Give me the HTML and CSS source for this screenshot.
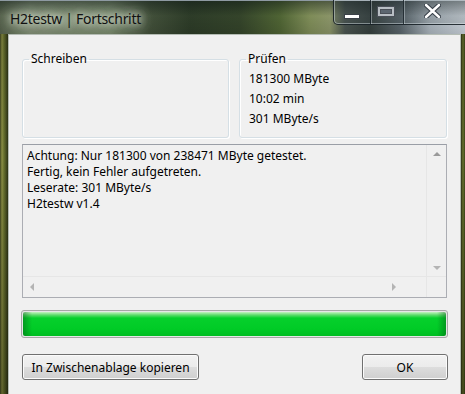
FILE: index.html
```html
<!DOCTYPE html>
<html lang="de">

  <head>
    <meta charset="UTF-8">
    <meta name="viewport" content="width=device-width, initial-scale=1.0">
    <title>H2testw | Fortschritt</title>

    <link rel="stylesheet" href="styles.css">
  </head>

  <body>

    <div class="window">

      <div class="titlebar">
        <span class="title">H2testw | Fortschritt</span>
        <div class="caption-buttons">
          <span class="cap cap-min">
            <svg width="16" height="5" viewBox="0 0 16 5">
              <rect x="0.5" y="0.5" width="15" height="4" fill="#fff" stroke="#3a4048" stroke-width="1"/>
            </svg>
          </span>
          <span class="cap cap-max">
            <svg width="18" height="11" viewBox="0 0 18 11">
              <rect x="0.5" y="0.5" width="17" height="10" fill="#b8bec4" stroke="#4a5058"/>
              <rect x="3.5" y="3.5" width="11" height="4" fill="#5c6670" stroke="#4a5058"/>
            </svg>
          </span>
          <span class="cap cap-close">
            <svg width="17" height="14" viewBox="0 0 17 14">
              <path d="M2 1 L15 13 M15 1 L2 13" stroke="#39414a" stroke-width="4.6" stroke-linecap="round"/>
              <path d="M2 1 L15 13 M15 1 L2 13" stroke="#fff" stroke-width="2.4" stroke-linecap="round"/>
            </svg>
          </span>
        </div>
      </div>

      <div class="client">

        <div class="groups">
          <fieldset class="group">
            <legend>Schreiben</legend>
          </fieldset>
          <fieldset class="group">
            <legend>Prüfen</legend>
            <p>181300 MByte</p>
            <p>10:02 min</p>
            <p>301 MByte/s</p>
          </fieldset>
        </div>

        <div class="log">
          <div class="log-text">
            <p>Achtung: Nur 181300 von 238471 MByte getestet.</p>
            <p>Fertig, kein Fehler aufgetreten.</p>
            <p>Leserate: 301 MByte/s</p>
            <p>H2testw v1.4</p>
          </div>
          <div class="vscroll">
            <span class="arrow arrow-up"></span>
            <span class="arrow arrow-down"></span>
          </div>
          <div class="hscroll">
            <span class="arrow arrow-left"></span>
            <span class="arrow arrow-right"></span>
          </div>
          <div class="corner"></div>
        </div>

        <div class="progress">
          <div class="progress-fill" style="width: 100%"></div>
        </div>

        <div class="buttons">
          <button type="button" class="copy">In Zwischenablage kopieren</button>
          <button type="button" class="ok">OK</button>
        </div>

      </div>
    </div>

  </body>

</html>
```

FILE: styles.css
```css
* {
  margin: 0;
  padding: 0;
  box-sizing: border-box;
}

body {
  width: 465px;
  height: 394px;
  overflow: hidden;
  font-family: "Noto Sans", "Open Sans", sans-serif;
  font-size: 12px;
  color: #000;
}

.window {
  height: 394px;
  display: flex;
  flex-direction: column;
  background:
    linear-gradient(to bottom, rgba(20, 24, 10, 0.2), rgba(0, 0, 0, 0) 40%, rgba(10, 10, 0, 0.3)),
    linear-gradient(to right, #3e4420 0, #8a8e44 2px, #66702e 4px, #4a5222 6px, #2a3014 8px, #2a3014 459px, #2a3014 461px, #6a7430 463px, #3b4219 465px);
}

.titlebar {
  height: 34px;
  flex: none;
  display: flex;
  justify-content: space-between;
  align-items: flex-start;
  border-top: 1px solid #8e9aa2;
  background:
    linear-gradient(to bottom, rgba(10, 20, 20, 0.45), rgba(0, 0, 0, 0) 45%, rgba(0, 0, 0, 0.1)),
    linear-gradient(to right, #56624c 0, #7e8c72 30px, #76866a 110px, #42503a 150px, #2d3c28 190px, #34442a 240px, #4f6434 280px, #7e8c58 310px, #8a9468 330px, #4a5450 345px, #36403e 370px, #59646a 400px, #aab4bc 430px, #c8d0d8 465px);
}

.title {
  margin: 8px 0 0 10px;
  font-size: 14px;
  letter-spacing: -0.3px;
  color: #111;
  text-shadow: 0 0 6px #dfe6da, 0 0 12px #c8d2c0, 0 0 14px #c8d2c0;
}

.caption-buttons {
  display: flex;
  height: 25px;
  margin-top: -1px;
  margin-right: -8px;
  border: 1px solid rgba(20, 30, 36, 0.85);
  border-top: none;
  border-radius: 0 0 5px 5px;
  box-shadow: inset 0 0 0 1px rgba(220, 230, 235, 0.45);
  background: rgba(60, 70, 74, 0.25);
}

.cap {
  display: flex;
  align-items: center;
  justify-content: center;
}

.cap + .cap {
  border-left: 1px solid rgba(20, 30, 36, 0.8);
  box-shadow: inset 1px 0 0 rgba(220, 230, 235, 0.4);
}

.cap-min {
  width: 36px;
  padding-top: 8px;
}

.cap-max {
  width: 33px;
  padding: 0 2px 2px 0;
}

.cap-close {
  width: 69px;
  padding: 0 12px 2px 0;
  background: linear-gradient(to right, rgba(255, 255, 255, 0), rgba(255, 255, 255, 0.15));
}

.client {
  flex: 1;
  margin: 0 4px 0 8px;
  padding: 16px 13px 0;
  border: 1px solid #b4bcb4;
  border-bottom: none;
  background: #f0f0f0;
  display: flex;
  flex-direction: column;
}

.groups {
  display: grid;
  grid-template-columns: 207px 208px;
  gap: 10px;
  height: 87px;
}

.group {
  border: 1px solid #d5dfe5;
  border-radius: 3px;
  box-shadow: inset 1px 1px 0 #fff, 1px 1px 0 #fff;
  padding: 2px 9px 0;
  min-width: 0;

  & legend {
    margin-left: -3px;
    padding: 0 2px;
    line-height: 16px;
  }

  & p {
    line-height: 20px;
  }
}

.log {
  margin-top: 6px;
  height: 154px;
  border: 1px solid #abadb3;
  border-top-color: #9a9ea6;
  display: grid;
  grid-template-columns: 1fr 20px;
  grid-template-rows: 1fr 21px;

  & .log-text {
    padding: 3px 4px 0;
    line-height: 16px;
    white-space: nowrap;
    overflow: hidden;
  }
}

.vscroll {
  display: flex;
  flex-direction: column;
  justify-content: space-between;
  align-items: center;
  padding: 7px 0 6px;
  border-left: 1px solid #e6e6e6;
}

.hscroll {
  display: flex;
  justify-content: space-between;
  align-items: center;
  padding: 0 30px 0 7px;
  border-top: 1px solid #e6e6e6;
}

.corner {
  border-top: 1px solid #e6e6e6;
  border-left: 1px solid #e6e6e6;
}

.arrow {
  width: 0;
  height: 0;
  border: 4px solid transparent;
}

.arrow-up {
  border-bottom: 4px solid #9a9a9a;
  border-top-width: 0;
}

.arrow-down {
  border-top: 4px solid #b4b4b4;
  border-bottom-width: 0;
}

.arrow-left {
  border-right: 4px solid #b4b4b4;
  border-left-width: 0;
}

.arrow-right {
  border-left: 4px solid #b4b4b4;
  border-right-width: 0;
}

.progress {
  margin: 12px -1px 0;
  height: 28px;
  border: 1px solid #a6a6a6;
  border-radius: 3px;
  background: #e6e6e6;
  padding: 1px;

  & .progress-fill {
    height: 100%;
    border-radius: 2px;
    background:
      linear-gradient(to right, rgba(0, 90, 20, 0.45), rgba(0, 90, 20, 0) 9px, rgba(0, 90, 20, 0) calc(100% - 9px), rgba(0, 90, 20, 0.45)),
      linear-gradient(to bottom, #c6f2c2 0, #5edc6c 3px, #06d02c 6px, #00cb26 70%, #00be22 100%);
  }
}

.buttons {
  margin-top: 16px;
  display: flex;
  justify-content: space-between;

  & button {
    height: 26px;
    font-family: "Noto Sans", "Open Sans", sans-serif;
    font-size: 12px;
    color: #000;
    border: 1px solid #707070;
    border-radius: 3px;
    box-shadow: inset 0 0 0 1px #fbfbfb;
    background: linear-gradient(to bottom, #f2f2f2 0, #ebebeb 50%, #dddddd 50%, #cfcfcf 100%);
  }

  & .copy {
    width: 177px;
  }

  & .ok {
    width: 86px;
    margin-right: -1px;
  }
}
```
